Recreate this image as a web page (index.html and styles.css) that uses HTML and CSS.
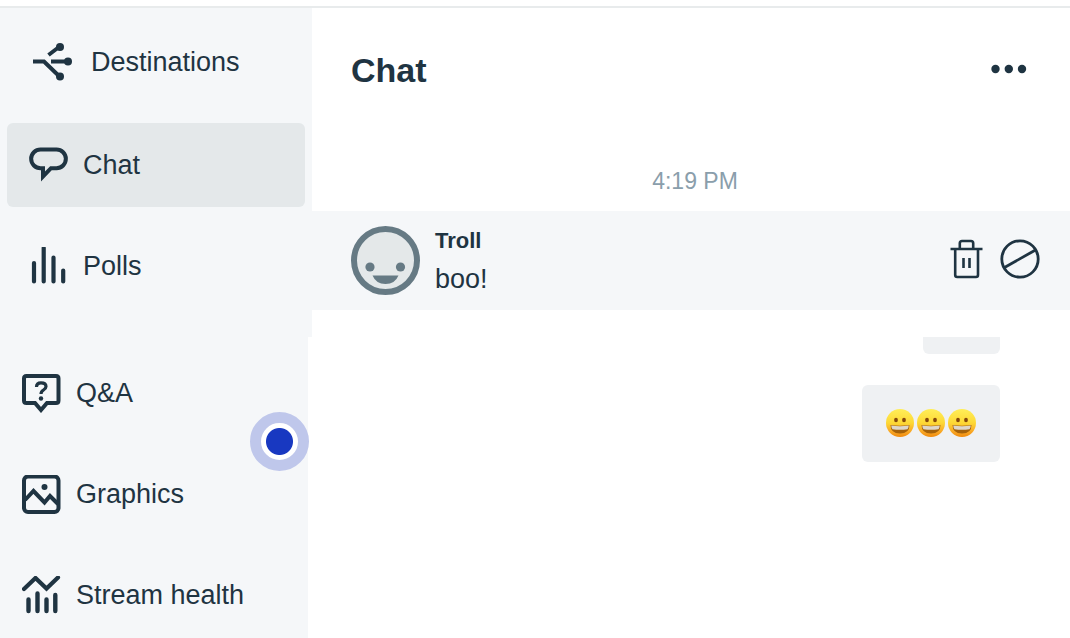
FILE: index.html
```
<!DOCTYPE html>
<html lang="en">
<head>
    <meta charset="UTF-8">
    <meta name="viewport" content="width=device-width, initial-scale=1.0">
    <title>Chat</title>
    <link rel="stylesheet" href="styles.css">
</head>
<body>

<!-- shared symbols -->
<svg class="defs" width="0" height="0" aria-hidden="true">
    <defs>
        <linearGradient id="face" x1="0" y1="0" x2="0" y2="1">
            <stop offset="0" stop-color="#ffee58"/>
            <stop offset="0.5" stop-color="#fdd835"/>
            <stop offset="0.8" stop-color="#f9a825"/>
            <stop offset="1" stop-color="#f08a0c"/>
        </linearGradient>
        <symbol id="grin" viewBox="0 0 28 28">
            <circle cx="14" cy="14" r="14" fill="url(#face)"/>
            <ellipse cx="10" cy="11" rx="1.900" ry="2.200" fill="#85480b"/>
            <ellipse cx="18" cy="11" rx="1.900" ry="2.200" fill="#85480b"/>
            <path d="M4.500 16Q14 17.500 23.500 16Q23.500 24.500 14 24.500Q4.500 24.500 4.500 16Z" fill="#a5620a"/>
            <path d="M5.200 16.500Q14 18 22.800 16.500Q22.600 18.800 21.500 20.200Q14 21.500 6.500 20.200Q5.400 18.800 5.200 16.500Z" fill="#ded6c8"/>
        </symbol>
    </defs>
</svg>

<div class="topbar"></div>

<div class="row">
    <nav class="sidebar sidebar-main">
        <a href="#" class="nav-item nav-wide">
            <svg class="icon" viewBox="0 0 39 39">
                <path d="M0 18.500H11L26 33M18 18.500H35M15.500 12L26 4" fill="none" stroke="currentColor" stroke-width="4"/>
                <circle cx="27" cy="4" r="4"/><circle cx="35" cy="18.500" r="4"/><circle cx="27" cy="33.500" r="4"/>
            </svg>
            <span>Destinations</span>
        </a>
        <a href="#" class="nav-item active">
            <svg class="icon" viewBox="0 0 39 39">
                <path d="M11.500 3.500H27.500A9.300 9.300 0 0 1 27.500 22.200H22L14 30.500V22.200H11.500A9.300 9.300 0 0 1 11.500 3.500Z" fill="none" stroke="currentColor" stroke-width="4"/>
            </svg>
            <span>Chat</span>
        </a>
        <a href="#" class="nav-item">
            <svg class="icon" viewBox="0 0 39 39">
                <path d="M5 16V34.500M14.700 1V34.500M24.500 10.500V34.500M34.200 23.500V34.500" fill="none" stroke="currentColor" stroke-width="4.200" stroke-linecap="round"/>
            </svg>
            <span>Polls</span>
        </a>
    </nav>

    <main class="chat">
        <header class="chat-header">
            <h1>Chat</h1>
            <button class="icon-btn" aria-label="More options">
                <svg width="36" height="12" viewBox="0 0 36 12" fill="currentColor">
                    <circle cx="4.500" cy="5" r="4.200"/><circle cx="17.800" cy="5" r="4.200"/><circle cx="31" cy="5" r="4.200"/>
                </svg>
            </button>
        </header>
        <time class="timestamp">4:19 PM</time>
        <article class="message">
            <svg class="avatar" viewBox="0 0 69 69">
                <circle cx="34.500" cy="34.500" r="31.500" fill="#e4e8e9" stroke="#667a84" stroke-width="6"/>
                <circle cx="19" cy="41" r="4.600" fill="#667a84"/>
                <circle cx="49.500" cy="41" r="4.600" fill="#667a84"/>
                <path d="M21.500 49.500H47.500Q44 58 34.500 58Q25 58 21.500 49.500Z" fill="#667a84"/>
            </svg>
            <div class="message-body">
                <strong>Troll</strong>
                <p>boo!</p>
            </div>
            <div class="actions">
                <button class="icon-btn" aria-label="Delete message">
                    <svg width="33" height="40" viewBox="0 0 33 40" fill="none" stroke="currentColor" stroke-width="2.600">
                        <path d="M0.500 10H32.500M5.200 10V36Q5.200 38 7.200 38H26Q28 38 28 36V10M9.800 9V4.200Q9.800 2 12 2H21Q23.200 2 23.200 4.200V9M13.500 19V29M19.500 19V29"/>
                    </svg>
                </button>
                <button class="icon-btn" aria-label="Ban user">
                    <svg width="40" height="40" viewBox="0 0 40 40" fill="none" stroke="currentColor" stroke-width="2.800">
                        <circle cx="20" cy="20" r="18.200"/>
                        <path d="M4.500 28.500L35.500 11"/>
                    </svg>
                </button>
            </div>
        </article>
    </main>
</div>

<div class="row row-bottom">
    <nav class="sidebar sidebar-tools">
        <a href="#" class="nav-item">
            <svg class="icon icon-line" viewBox="0 0 39 39">
                <path d="M4.500 2H34Q36.500 2 36.500 4.500V26.500Q36.500 29 34 29H25L19 36L13 29H4.500Q2 29 2 26.500V4.500Q2 2 4.500 2Z"/>
                <path d="M14.500 13Q14.500 8.800 19 8.800Q24 8.800 24 12.500Q24 14.500 21.500 16Q19 17.500 19 20" stroke-width="3.200"/>
                <circle cx="19" cy="24.500" r="2.200" fill="currentColor" stroke="none"/>
            </svg>
            <span>Q&amp;A</span>
        </a>
        <a href="#" class="nav-item">
            <svg class="icon icon-line" viewBox="0 0 39 39">
                <rect x="2" y="1.500" width="34.500" height="35.500" rx="4"/>
                <path d="M3 25L11.500 16L22.500 27.500L28 21L36 29"/>
                <circle cx="22.500" cy="12" r="3" fill="currentColor" stroke="none"/>
            </svg>
            <span>Graphics</span>
        </a>
        <a href="#" class="nav-item">
            <svg class="icon icon-line" viewBox="0 0 39 39" stroke-linecap="round">
                <path d="M2 13L13.500 2L24.500 12.500L36 1.500" stroke-width="4.200"/>
                <path d="M6.500 23.500V35M15.500 17.500V35M24.500 23.500V35M33.300 19V35" stroke-width="4.400"/>
            </svg>
            <span>Stream health</span>
        </a>
        <button class="beacon" aria-label="Open help"></button>
    </nav>

    <section class="replies">
        <div class="bubble bubble-cut"></div>
        <div class="bubble bubble-emoji" role="img" aria-label="Grinning faces">
            <svg class="emoji"><use href="#grin"/></svg>
            <svg class="emoji"><use href="#grin"/></svg>
            <svg class="emoji"><use href="#grin"/></svg>
        </div>
    </section>
</div>

</body>
</html>
```
FILE: styles.css
```
* {
    box-sizing: border-box;
}

body {
    margin: 0;
    min-height: 100vh;
    display: flex;
    flex-direction: column;
    background-color: #ffffff;
    color: #1f3442;
    font-family: "Liberation Sans", Arial, sans-serif;
    font-size: 27px;
    line-height: 32px;
}

.defs {
    position: absolute;
}

.topbar {
    height: 8px;
    border-bottom: 2px solid #e8ebec;
}

/* Layout */
.row {
    display: flex;
}

.row-bottom {
    flex: 1;
}

.sidebar {
    position: relative;
    flex-shrink: 0;
    display: flex;
    flex-direction: column;
    gap: 17px;
    background-color: #f5f7f9;
}

.sidebar-main {
    width: 312px;
    padding: 14px 7px 29px;
}

.sidebar-tools {
    width: 308px;
    padding-top: 14px;
}

/* Navigation */
.nav-item {
    display: flex;
    align-items: center;
    gap: 15px;
    height: 84px;
    padding: 0 22px;
    border-radius: 6px;
    color: inherit;
    text-decoration: none;
}

.nav-wide {
    gap: 19px;
    padding: 0 26px 4px;
}

.nav-item.active {
    background-color: #e4e8ea;
}

.icon {
    width: 39px;
    height: 39px;
    fill: currentColor;
}

.icon-line {
    fill: none;
    stroke: currentColor;
    stroke-width: 4;
}

.beacon {
    position: absolute;
    top: 75px;
    right: -1px;
    width: 59px;
    height: 59px;
    padding: 0;
    border: 11px solid #bfc7eb;
    border-radius: 50%;
    background: radial-gradient(circle, #1838c1 13px, #ffffff 14px);
    cursor: pointer;
}

/* Chat panel */
.chat,
.replies {
    flex: 1;
    min-width: 0;
}

.chat-header {
    display: flex;
    align-items: center;
    justify-content: space-between;
    height: 124px;
    padding: 0 43px 0 39px;
}

h1 {
    margin: 0;
    font-size: 34px;
    line-height: 40px;
}

.icon-btn {
    display: flex;
    padding: 0;
    border: 0;
    background: none;
    color: inherit;
    cursor: pointer;
}

.timestamp {
    display: block;
    padding: 34px 0 15px 8px;
    color: #8a9eab;
    font-size: 23px;
    line-height: 30px;
    text-align: center;
}

.message {
    display: flex;
    align-items: center;
    gap: 15px;
    padding: 15px 30px 15px 39px;
    background-color: #f5f7f9;
}

.avatar {
    width: 69px;
    height: 69px;
}

.message-body {
    flex: 1;
}

.message-body strong {
    display: block;
    font-size: 22px;
    line-height: 30px;
}

.message-body p {
    margin: 7px 0 0;
}

.actions {
    display: flex;
    gap: 17px;
    padding-bottom: 4px;
}

/* Own messages */
.replies {
    display: flex;
    flex-direction: column;
    align-items: flex-end;
    gap: 31px;
    padding-right: 70px;
}

.bubble {
    border-radius: 6px;
    background-color: #eff1f3;
}

.bubble-cut {
    width: 77px;
    height: 17px;
    border-radius: 0 0 6px 6px;
}

.bubble-emoji {
    display: flex;
    gap: 3px;
    padding: 24px 24px 25px;
}

.emoji {
    width: 28px;
    height: 28px;
}
```
